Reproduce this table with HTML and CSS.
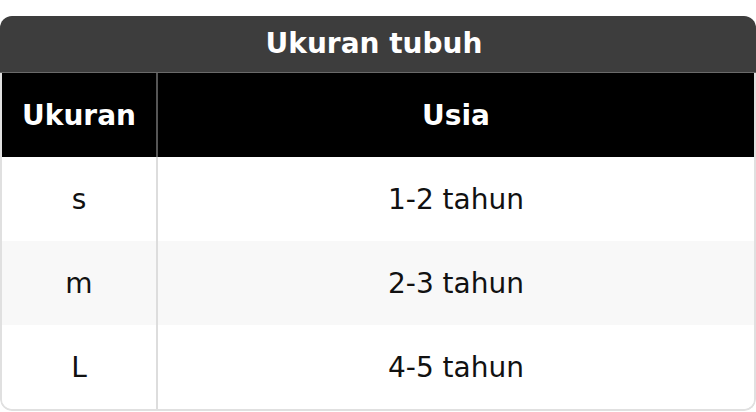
FILE: index.html
```html
<!DOCTYPE html>
<html lang="id">
<head>
<meta charset="utf-8">
<link rel="stylesheet" href="styles.css">
</head>
<body>
<div class="card">
  <div class="title">Ukuran tubuh</div>
  <table class="size-table">
    <thead>
      <tr><th class="c1">Ukuran</th><th>Usia</th></tr>
    </thead>
    <tbody>
      <tr><td class="c1">s</td><td>1-2 tahun</td></tr>
      <tr class="alt"><td class="c1">m</td><td>2-3 tahun</td></tr>
      <tr><td class="c1">L</td><td>4-5 tahun</td></tr>
    </tbody>
  </table>
</div>
</body>
</html>
```

FILE: styles.css
```css
html, body {
  margin: 0;
  padding: 0;
  background: #fff;
}
body {
  padding-top: 16px;
  font-family: "DejaVu Sans", sans-serif;
}
.card {
  width: 756px;
  border-radius: 12px;
  overflow: hidden;
  box-sizing: border-box;
}
.title {
  background: #3d3d3d;
  color: #fff;
  font-weight: bold;
  font-size: 28px;
  height: 56px;
  line-height: 56px;
  text-align: center;
  padding-right: 8px;
  border-bottom: 1px solid #6a6a6a;
}
.size-table {
  width: 100%;
  border-collapse: separate;
  border-spacing: 0;
  font-size: 28px;
  border: 2px solid #e0e0e0;
  border-top: none;
  border-radius: 0 0 12px 12px;
  box-sizing: border-box;
  overflow: hidden;
}
.size-table th {
  background: #000;
  color: #fff;
  font-weight: bold;
  height: 84px;
  padding: 0;
}
.size-table th.c1 {
  border-right: 2px solid #555;
}
.size-table td {
  height: 84px;
  padding: 0;
  text-align: center;
  color: #111;
  background: #fff;
}
.size-table td.c1 {
  border-right: 2px solid #dddddd;
}
.size-table .c1 {
  width: 154px;
}
.size-table tr.alt td {
  background: #f8f8f8;
}
```
